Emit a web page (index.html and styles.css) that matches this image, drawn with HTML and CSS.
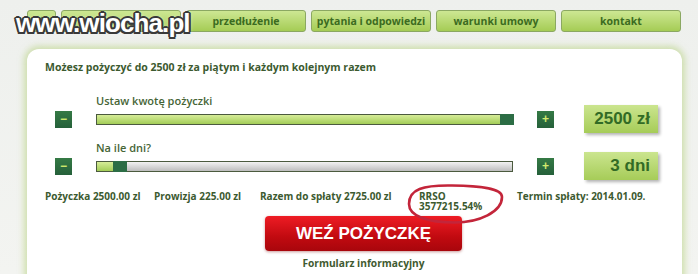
FILE: index.html
```html
<!DOCTYPE html>
<html lang="pl">

<head>
    <meta charset="UTF-8">
    <meta name="viewport" content="width=device-width, initial-scale=1.0">
    <title>Pożyczka</title>
    <link rel="stylesheet" href="styles.css">
</head>

<body>
    <div class="page">
        <div class="logo">www.wiocha.pl</div>

        <nav class="tabs">
            <a class="tab home" href="#">
                <svg width="12" height="11" viewBox="0 0 12 11">
                    <path d="M1 6 L6 1.5 L11 6 M2.8 5 V10 H9.2 V5" fill="none" stroke="#4d7f2a" stroke-width="1.4"/>
                </svg>
            </a>
            <a class="tab" href="#">jak to działa</a>
            <a class="tab" href="#">przedłużenie</a>
            <a class="tab" href="#">pytania i odpowiedzi</a>
            <a class="tab" href="#">warunki umowy</a>
            <a class="tab" href="#">kontakt</a>
        </nav>

        <div class="card">
            <p class="lead">Możesz pożyczyć do 2500 zł za piątym i każdym kolejnym razem</p>

            <div class="slider-row">
                <div class="label">Ustaw kwotę pożyczki</div>
                <button class="step">&minus;</button>
                <div class="track">
                    <div class="fill" style="width: 100%"></div>
                    <div class="handle" style="left: 98.5%"></div>
                </div>
                <button class="step">+</button>
                <div class="value">2500 zł</div>
            </div>

            <div class="slider-row">
                <div class="label">Na ile dni?</div>
                <button class="step">&minus;</button>
                <div class="track">
                    <div class="fill" style="width: 5.3%"></div>
                    <div class="handle" style="left: 5.3%"></div>
                </div>
                <button class="step">+</button>
                <div class="value">3 dni</div>
            </div>

            <div class="summary">
                <div>Pożyczka 2500.00 zl</div>
                <div>Prowizja 225.00 zl</div>
                <div>Razem do spłaty 2725.00 zl</div>
                <div class="rrso">
                    RRSO<br>3577215.54%
                    <svg class="circle" width="100" height="42" viewBox="0 0 100 42">
                        <path d="M2 20 C2 5 16 1 45 1.5 C72 2 95 4 95 13 C95 28 72 38.5 48 38.5 C20 38.5 2 32 2 20 Z" fill="none" stroke="#c3253a" stroke-width="2.6"/>
                    </svg>
                </div>
                <div>Termin spłaty: 2014.01.09.</div>
            </div>

            <div class="actions">
                <button class="take">WEŹ POŻYCZKĘ</button>
                <a class="form-link" href="#">Formularz informacyjny</a>
            </div>
        </div>
    </div>
</body>

</html>
```

FILE: styles.css
```css
body {
    margin: 0;
    font-family: 'Open Sans', sans-serif;
    background: linear-gradient(180deg, #eef0ed, #f3f4f1);
    color: #3c5a30;
}

.page {
    position: relative;
    height: 274px;
    overflow: hidden;
    padding-top: 10px;
    box-sizing: border-box;
}

/* watermark over the menu */
.logo {
    position: absolute;
    left: 16px;
    top: 8px;
    z-index: 2;
    font-family: 'Liberation Sans', Arial, sans-serif;
    font-weight: bold;
    font-size: 26px;
    letter-spacing: -0.9px;
    color: #fff;
    text-shadow:
        2px 0 0 #3a3a3a, -2px 0 0 #3a3a3a, 0 2px 0 #3a3a3a, 0 -2px 0 #3a3a3a,
        1.5px 1.5px 0 #3a3a3a, -1.5px 1.5px 0 #3a3a3a, 1.5px -1.5px 0 #3a3a3a, -1.5px -1.5px 0 #3a3a3a,
        0 0 5px #fff;
}

.tabs {
    display: flex;
    gap: 5px;
    padding-left: 27px;
}

.tab {
    width: 120px;
    height: 22px;
    box-sizing: border-box;
    display: flex;
    align-items: center;
    justify-content: center;
    border: 1px solid #8ba862;
    border-radius: 3px;
    background: linear-gradient(180deg, #cde793, #a5cc55);
    color: #3b6b1f;
    font-size: 10.5px;
    font-weight: bold;
    text-decoration: none;
}

.tab.home {
    width: 29px;
}

.card {
    margin: 17px 0 0 27px;
    width: 655px;
    height: 240px;
    box-sizing: border-box;
    padding: 11px 0 0 18px;
    background: #fff;
    border-radius: 12px 12px 0 0;
    box-shadow: 0 0 6px 3px rgba(178, 207, 120, 0.55);
}

.lead {
    margin: 0;
    font-size: 10.5px;
    font-weight: bold;
    line-height: 14px;
}

.slider-row {
    display: grid;
    grid-template-columns: 17px 417px 17px 80px;
    grid-template-rows: 11px 28px;
    column-gap: 24px;
    align-items: center;
    margin: 20px 0 0 10px;
}

.slider-row + .slider-row {
    margin-top: 8px;
}

.slider-row .label {
    grid-column: 2;
    grid-row: 1;
    align-self: start;
    font-size: 11px;
    font-weight: 600;
    line-height: 14px;
    color: #466536;
}

.step {
    grid-row: 2;
    width: 17px;
    height: 17px;
    padding: 0;
    border: none;
    background: linear-gradient(180deg, #357a45, #25603a);
    color: #d3ea6e;
    font-family: 'Liberation Sans', Arial, sans-serif;
    font-size: 12px;
    font-weight: bold;
    line-height: 17px;
}

.track {
    grid-row: 2;
    position: relative;
    height: 11px;
    box-sizing: border-box;
    border: 1px solid #4b5a3e;
    background: linear-gradient(180deg, #f2f2f2, #bdbdbd);
}

.fill {
    height: 100%;
    background: linear-gradient(180deg, #d6ec98, #a3cd58);
}

.handle {
    position: absolute;
    top: -1px;
    width: 14px;
    height: 11px;
    margin-left: -6px;
    background: #2c6d45;
}

.value {
    grid-row: 2;
    margin-left: 6px;
    height: 28px;
    box-sizing: border-box;
    padding-right: 8px;
    text-align: right;
    font-family: 'Liberation Sans', Arial, sans-serif;
    font-size: 17px;
    font-weight: bold;
    line-height: 28px;
    color: #326b25;
    background: linear-gradient(180deg, #cbe58f, #a6cc58);
    box-shadow: 2px 2px 3px rgba(0, 0, 0, 0.3);
}

.summary {
    display: grid;
    grid-template-columns: 109px 106px 159px 98px auto;
    margin-top: 11px;
    font-size: 10px;
    font-weight: bold;
    line-height: 10px;
}

.rrso {
    position: relative;
}

.circle {
    position: absolute;
    left: -12px;
    top: -7px;
}

.actions {
    display: flex;
    flex-direction: column;
    align-items: center;
    margin-top: 5px;
}

.take {
    width: 197px;
    height: 35px;
    border: none;
    border-radius: 4px;
    background: linear-gradient(180deg, #ee1c24, #c10a10 60%, #a8060c);
    box-shadow: 0 1px 3px rgba(120, 0, 0, 0.4);
    color: #fff;
    font-family: 'Liberation Sans', Arial, sans-serif;
    font-size: 17px;
    font-weight: bold;
}

.form-link {
    margin-top: 5px;
    font-size: 10.2px;
    font-weight: bold;
    color: #3f5a30;
    text-decoration: none;
}
```
